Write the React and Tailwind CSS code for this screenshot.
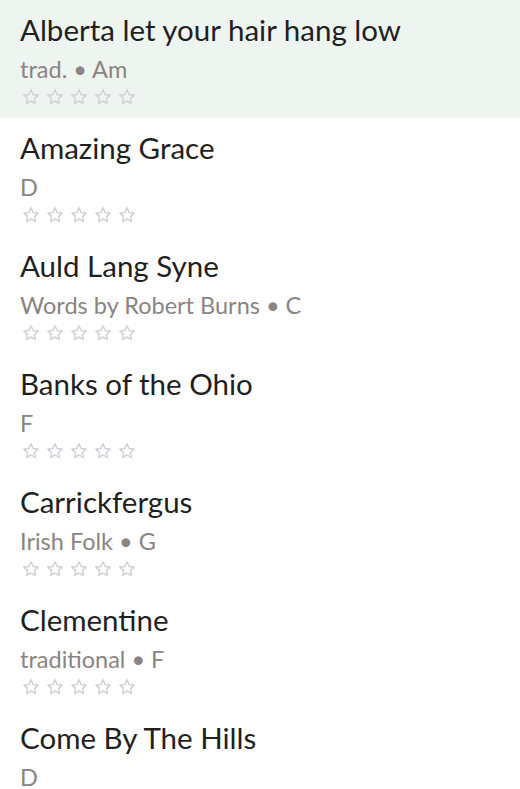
const songs = [
  { title: "Alberta let your hair hang low", meta: "trad. • Am", active: true },
  { title: "Amazing Grace", meta: "D" },
  { title: "Auld Lang Syne", meta: "Words by Robert Burns • C" },
  { title: "Banks of the Ohio", meta: "F" },
  { title: "Carrickfergus", meta: "Irish Folk • G" },
  { title: "Clementine", meta: "traditional • F" },
  { title: "Come By The Hills", meta: "D" },
];

const Star = () => (
  <svg width="18" height="18" viewBox="0 0 24 24" fill="none" stroke="#d3d3da" strokeWidth="2.1" strokeLinejoin="round">
    <path d="M12 2.5l2.9 6.2 6.6.8-4.9 4.6 1.3 6.6L12 17.4l-5.9 3.3 1.3-6.6-4.9-4.6 6.6-.8z" />
  </svg>
);

const SongRow = ({ song }) => (
  <div className={`px-5 pt-[12px] h-[118px] ${song.active ? "bg-[#eef5f1]" : "bg-white"}`}>
    <div className="text-[29.5px] leading-[36px] text-[#1f1f1f]">{song.title}</div>
    <div className="text-[23.5px] leading-[30px] mt-[6px] text-[#8a8482]">{song.meta}</div>
    <div className="flex gap-[6px] mt-[4px] pl-[2px]">
      <Star />
      <Star />
      <Star />
      <Star />
      <Star />
    </div>
  </div>
);

const App = () => {
  return (
    <div className="w-[520px] h-[789px] overflow-hidden bg-white" style={{ fontFamily: "Lato, 'Noto Sans', sans-serif" }}>
      {songs.map((s) => (
        <SongRow key={s.title} song={s} />
      ))}
    </div>
  );
};

export default App;
